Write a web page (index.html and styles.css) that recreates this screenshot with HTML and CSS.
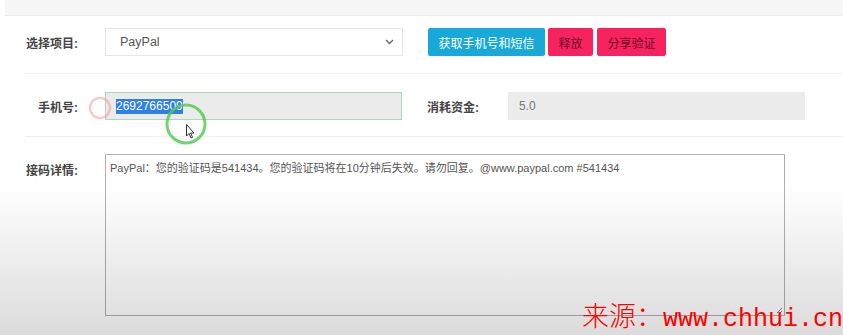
FILE: index.html
```html
<!DOCTYPE html>
<html lang="zh">
<head>
<meta charset="utf-8">
<link rel="stylesheet" href="styles.css">
</head>
<body>
<div class="topbar"></div>
<div class="row row1">
  <div class="label">选择项目:</div>
  <div class="select">
    <span>PayPal</span>
    <svg class="chev" width="9" height="6" viewBox="0 0 9 6"><path d="M1 1 L4.5 4.5 L8 1" fill="none" stroke="#666" stroke-width="1.3"/></svg>
  </div>
  <div class="btns">
    <button class="btn blue">获取手机号和短信</button>
    <button class="btn red">释放</button>
    <button class="btn red">分享验证</button>
  </div>
</div>
<div class="row row2">
  <div class="label">手机号:</div>
  <div class="input phone"><span class="sel">2692766509</span></div>
  <div class="label2">消耗资金:</div>
  <div class="input cost">5.0</div>
</div>
<div class="row row3">
  <div class="label top">接码详情:</div>
  <div class="textarea">PayPal：您的验证码是541434。您的验证码将在10分钟后失效。请勿回复。@www.paypal.com #541434
    <svg class="grip" width="8" height="8" viewBox="0 0 8 8"><path d="M7 2 L2 7 M7 5 L5 7" stroke="#888" stroke-width="1"/></svg>
  </div>
</div>
<div class="shade"></div>
<svg class="marks" width="843" height="335" viewBox="0 0 843 335">
  <circle cx="100" cy="108" r="10" fill="none" stroke="rgba(240,140,140,0.45)" stroke-width="2.5"/>
  <circle cx="186" cy="124" r="19" fill="none" stroke="rgba(80,200,80,0.8)" stroke-width="3"/>
  <path d="M186.5 124.5 L186.5 136 L189 133.5 L191 138 L192.5 137.3 L190.6 133 L194 133 Z" fill="#fff" stroke="#333" stroke-width="1"/>
</svg>
<div class="watermark"><span class="cjk">来源：</span><span class="url">www.chhui.cn</span></div>
</body>
</html>
```
FILE: styles.css
```css
html, body {
  margin: 0;
  padding: 0;
}
body {
  width: 843px;
  height: 335px;
  overflow: hidden;
  position: relative;
  background: #fff;
  font-family: "Liberation Sans", "Noto Sans CJK SC", sans-serif;
  color: #333;
}
.topbar {
  height: 15px;
  background: #f6f6f6;
  border-bottom: 1px solid #ebebeb;
  margin-left: 5px;
}
.row {
  display: flex;
  align-items: center;
  margin-left: 25px;
  border-bottom: 1px solid #f0f0f0;
}
.row1 {
  padding: 12px 0 17px;
}
.row2 {
  padding: 18px 0 16px;
}
.row3 {
  align-items: flex-start;
  padding-top: 17px;
  border-bottom: none;
}
.label {
  width: 53px;
  margin-right: 27px;
  text-align: right;
  font-size: 12px;
  font-weight: bold;
  color: #444;
  white-space: nowrap;
}
.label.top {
  margin-top: 7px;
}
.select {
  box-sizing: border-box;
  width: 298px;
  height: 28px;
  border: 1px solid #e6e6e6;
  background: #fff;
  display: flex;
  align-items: center;
  justify-content: space-between;
  padding: 0 8px 0 14px;
  font-size: 12.5px;
  color: #555;
}
.btns {
  display: flex;
  gap: 3px;
  margin-left: 25px;
}
.btn {
  height: 28px;
  border: none;
  border-radius: 2px;
  font-family: "Noto Sans CJK SC", sans-serif;
  font-size: 12px;
  padding: 0;
}
.btn.blue {
  width: 117px;
  background: #18a9d8;
  color: #fff;
}
.btn.red {
  background: #f7235e;
  color: #6e0f26;
}
.btn.red:nth-child(2) {
  width: 45px;
}
.btn.red:nth-child(3) {
  width: 69px;
  margin-left: 1px;
}
.input {
  box-sizing: border-box;
  height: 28px;
  background: #ebebeb;
  display: flex;
  align-items: center;
  font-size: 12px;
}
.phone {
  width: 297px;
  border: 1px solid #a9d8bb;
  padding-left: 10px;
}
.sel {
  background: #2e7fe6;
  color: #fff;
  line-height: 15px;
}
.label2 {
  margin-left: 25px;
  width: 81px;
  font-size: 12px;
  font-weight: bold;
  color: #444;
}
.cost {
  width: 297px;
  padding-left: 11px;
  color: #777;
  background: #ececec;
}
.textarea {
  box-sizing: border-box;
  position: relative;
  width: 680px;
  height: 162px;
  border: 1px solid #b0b0b0;
  padding: 4px 4px;
  font-size: 11px;
  color: #555;
  background: #fff;
  white-space: pre-wrap;
}
.grip {
  position: absolute;
  right: 1px;
  bottom: 1px;
}
.shade {
  position: absolute;
  left: 0;
  right: 0;
  top: 185px;
  bottom: 0;
  background: linear-gradient(to bottom, rgba(0,0,0,0), rgba(0,0,0,0.14));
  pointer-events: none;
}
.marks {
  position: absolute;
  left: 0;
  top: 0;
  pointer-events: none;
}
.watermark {
  position: absolute;
  right: 0;
  bottom: 0;
  color: #ff0000;
  white-space: nowrap;
  line-height: 1.15;
}
.watermark .cjk {
  font-family: "Noto Sans CJK SC", serif;
  font-weight: 300;
  font-size: 27px;
}
.watermark .url {
  font-family: "Liberation Mono", monospace;
  font-size: 25px;
}
```
